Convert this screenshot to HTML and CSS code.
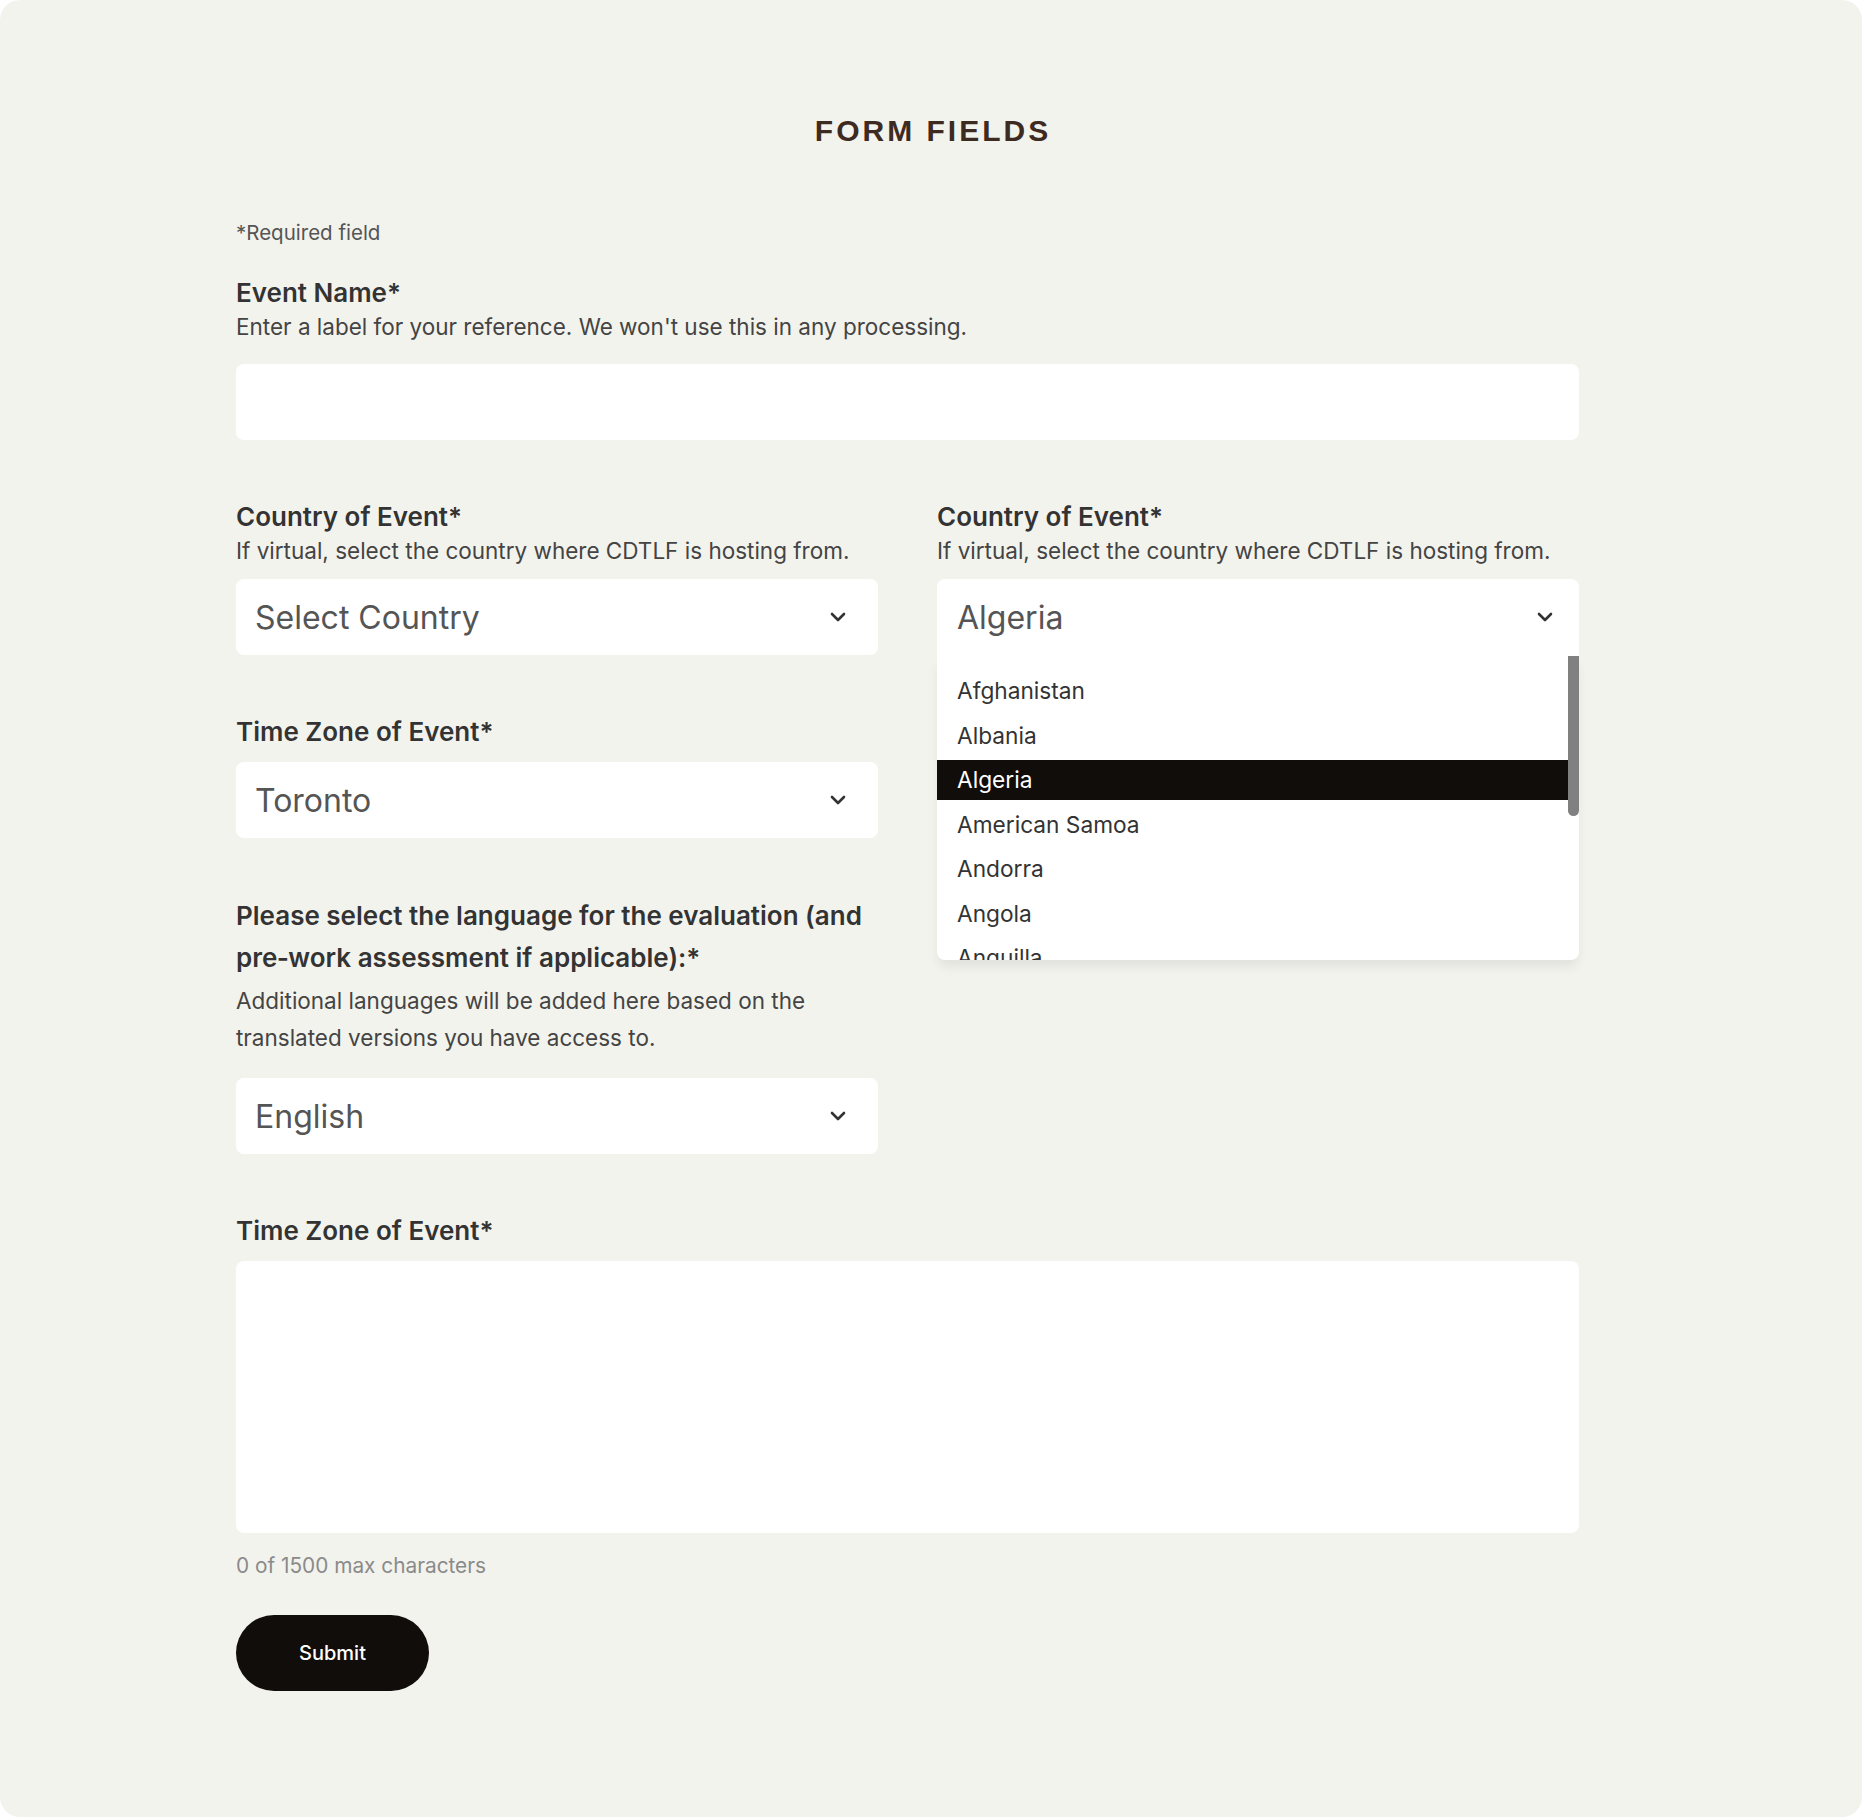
FILE: index.html
```html
<!DOCTYPE html>
<html lang="en">
<head>
    <meta charset="UTF-8">
    <meta name="viewport" content="width=device-width, initial-scale=1.0">
    <title>Form Fields</title>
    <link rel="stylesheet" href="styles.css">
</head>
<body>
    <div class="card">
        <h1 class="title">Form Fields</h1>

        <form class="form">
            <p class="required-note">*Required field</p>

            <div class="field field-name">
                <label class="label" for="eventName">Event Name*</label>
                <p class="help">Enter a label for your reference. We won't use this in any processing.</p>
                <input class="input" type="text" id="eventName">
            </div>

            <div class="columns">
                <div class="column">
                    <div class="field">
                        <label class="label">Country of Event*</label>
                        <p class="help">If virtual, select the country where CDTLF is hosting from.</p>
                        <div class="select">
                            <span class="select-value">Select Country</span>
                            <svg class="chevron" width="16" height="10" viewBox="0 0 16 10"><path d="M2 2l6 6 6-6" fill="none" stroke="#333" stroke-width="2.6" stroke-linecap="round" stroke-linejoin="round"/></svg>
                        </div>
                    </div>

                    <div class="field field-gap">
                        <label class="label">Time Zone of Event*</label>
                        <div class="select">
                            <span class="select-value">Toronto</span>
                            <svg class="chevron" width="16" height="10" viewBox="0 0 16 10"><path d="M2 2l6 6 6-6" fill="none" stroke="#333" stroke-width="2.6" stroke-linecap="round" stroke-linejoin="round"/></svg>
                        </div>
                    </div>

                    <div class="field field-lang">
                        <label class="label label-long">Please select the language for the evaluation (and pre&#8209;work assessment if applicable):*</label>
                        <p class="help help-long">Additional languages will be added here based on the translated versions you have access to.</p>
                        <div class="select">
                            <span class="select-value">English</span>
                            <svg class="chevron" width="16" height="10" viewBox="0 0 16 10"><path d="M2 2l6 6 6-6" fill="none" stroke="#333" stroke-width="2.6" stroke-linecap="round" stroke-linejoin="round"/></svg>
                        </div>
                    </div>
                </div>

                <div class="column">
                    <div class="field">
                        <label class="label">Country of Event*</label>
                        <p class="help">If virtual, select the country where CDTLF is hosting from.</p>
                        <div class="dropdown">
                            <div class="select open">
                                <span class="select-value">Algeria</span>
                                <svg class="chevron" width="16" height="10" viewBox="0 0 16 10"><path d="M2 2l6 6 6-6" fill="none" stroke="#333" stroke-width="2.6" stroke-linecap="round" stroke-linejoin="round"/></svg>
                            </div>
                            <div class="menu">
                                <ul class="options">
                                    <li>Afghanistan</li>
                                    <li>Albania</li>
                                    <li class="active">Algeria</li>
                                    <li>American Samoa</li>
                                    <li>Andorra</li>
                                    <li>Angola</li>
                                    <li>Anguilla</li>
                                </ul>
                                <div class="scrollbar"></div>
                            </div>
                        </div>
                    </div>
                </div>
            </div>

            <div class="field field-gap">
                <label class="label" for="notes">Time Zone of Event*</label>
                <textarea class="textarea" id="notes"></textarea>
                <p class="counter">0 of 1500 max characters</p>
            </div>

            <button type="button" class="submit">Submit</button>
        </form>
    </div>
</body>
</html>
```

FILE: styles.css
```css
body {
    margin: 0;
    background-color: #ffffff;
    font-family: Inter, "Liberation Sans", Arial, sans-serif;
    color: #333;
}
.card {
    width: 1862px;
    height: 1817px;
    box-sizing: border-box;
    background-color: #f3f3ee;
    border-radius: 20px;
    padding-top: 113px;
}
.title {
    margin: 0;
    text-align: center;
    font-family: "Liberation Sans", Arial, sans-serif;
    font-size: 30px;
    line-height: 36px;
    font-weight: bold;
    letter-spacing: 3px;
    text-transform: uppercase;
    color: #3d2b22;
    padding-left: 4px;
}
.form {
    width: 1343px;
    margin: 72px 0 0 236px;
}
.required-note {
    margin: 0;
    font-size: 20.5px;
    line-height: 24px;
    color: #555;
}
.field-name {
    margin-top: 31px;
}
.label {
    display: block;
    font-size: 26px;
    line-height: 34px;
    font-weight: 600;
    color: #333;
}
.help {
    margin: 0;
    font-size: 22.5px;
    line-height: 34px;
    color: #444;
}
.input, .textarea {
    display: block;
    width: 100%;
    box-sizing: border-box;
    border: none;
    border-radius: 8px;
    background-color: #fff;
    font: inherit;
}
.input {
    height: 76px;
    margin-top: 20px;
}
.columns {
    display: grid;
    grid-template-columns: 642px 642px;
    column-gap: 59px;
    margin-top: 60px;
}
.select {
    display: flex;
    align-items: center;
    justify-content: space-between;
    height: 76px;
    margin-top: 11px;
    padding: 0 32px 0 19px;
    background-color: #fff;
    border-radius: 8px;
}
.select-value {
    font-size: 32px;
    color: #555;
}
.field-gap {
    margin-top: 60px;
}
.field-gap .select,
.field-gap .textarea {
    margin-top: 13px;
}
.field-lang {
    margin-top: 57px;
}
.label-long {
    line-height: 42px;
}
.help-long {
    margin-top: 3px;
    line-height: 37px;
}
.field-lang .select {
    margin-top: 22px;
}
.dropdown {
    position: relative;
    margin-top: 11px;
}
.dropdown .select {
    position: relative;
    z-index: 1;
    margin-top: 0;
    border-radius: 8px 8px 0 0;
    padding-left: 20px;
    padding-right: 26px;
}
.menu {
    position: absolute;
    top: 76px;
    left: 0;
    right: 0;
    height: 305px;
    overflow: hidden;
    background-color: #fff;
    border-radius: 0 0 8px 8px;
    box-shadow: 0 8px 12px -2px rgba(0,0,0,0.08);
}
.options {
    list-style: none;
    margin: 0;
    padding: 16px 11px 0 0;
    display: flex;
    flex-direction: column;
    gap: 4.5px;
}
.options li {
    height: 40px;
    line-height: 40px;
    padding-left: 20px;
    font-size: 22.7px;
    color: #333;
}
.options li.active {
    background-color: #110d0a;
    color: #fff;
}
.scrollbar {
    position: absolute;
    top: 1px;
    right: 0;
    width: 11px;
    height: 160px;
    background-color: #808080;
    border-radius: 0 0 6px 6px;
}
.textarea {
    height: 272px;
    resize: none;
}
.counter {
    margin: 21px 0 0;
    font-size: 20.8px;
    line-height: 24px;
    color: #8a8a8a;
}
.submit {
    margin-top: 37px;
    width: 193px;
    height: 76px;
    border: none;
    border-radius: 38px;
    background-color: #110d0a;
    color: #fff;
    font-family: inherit;
    font-size: 20px;
    font-weight: 500;
    cursor: pointer;
}
```
